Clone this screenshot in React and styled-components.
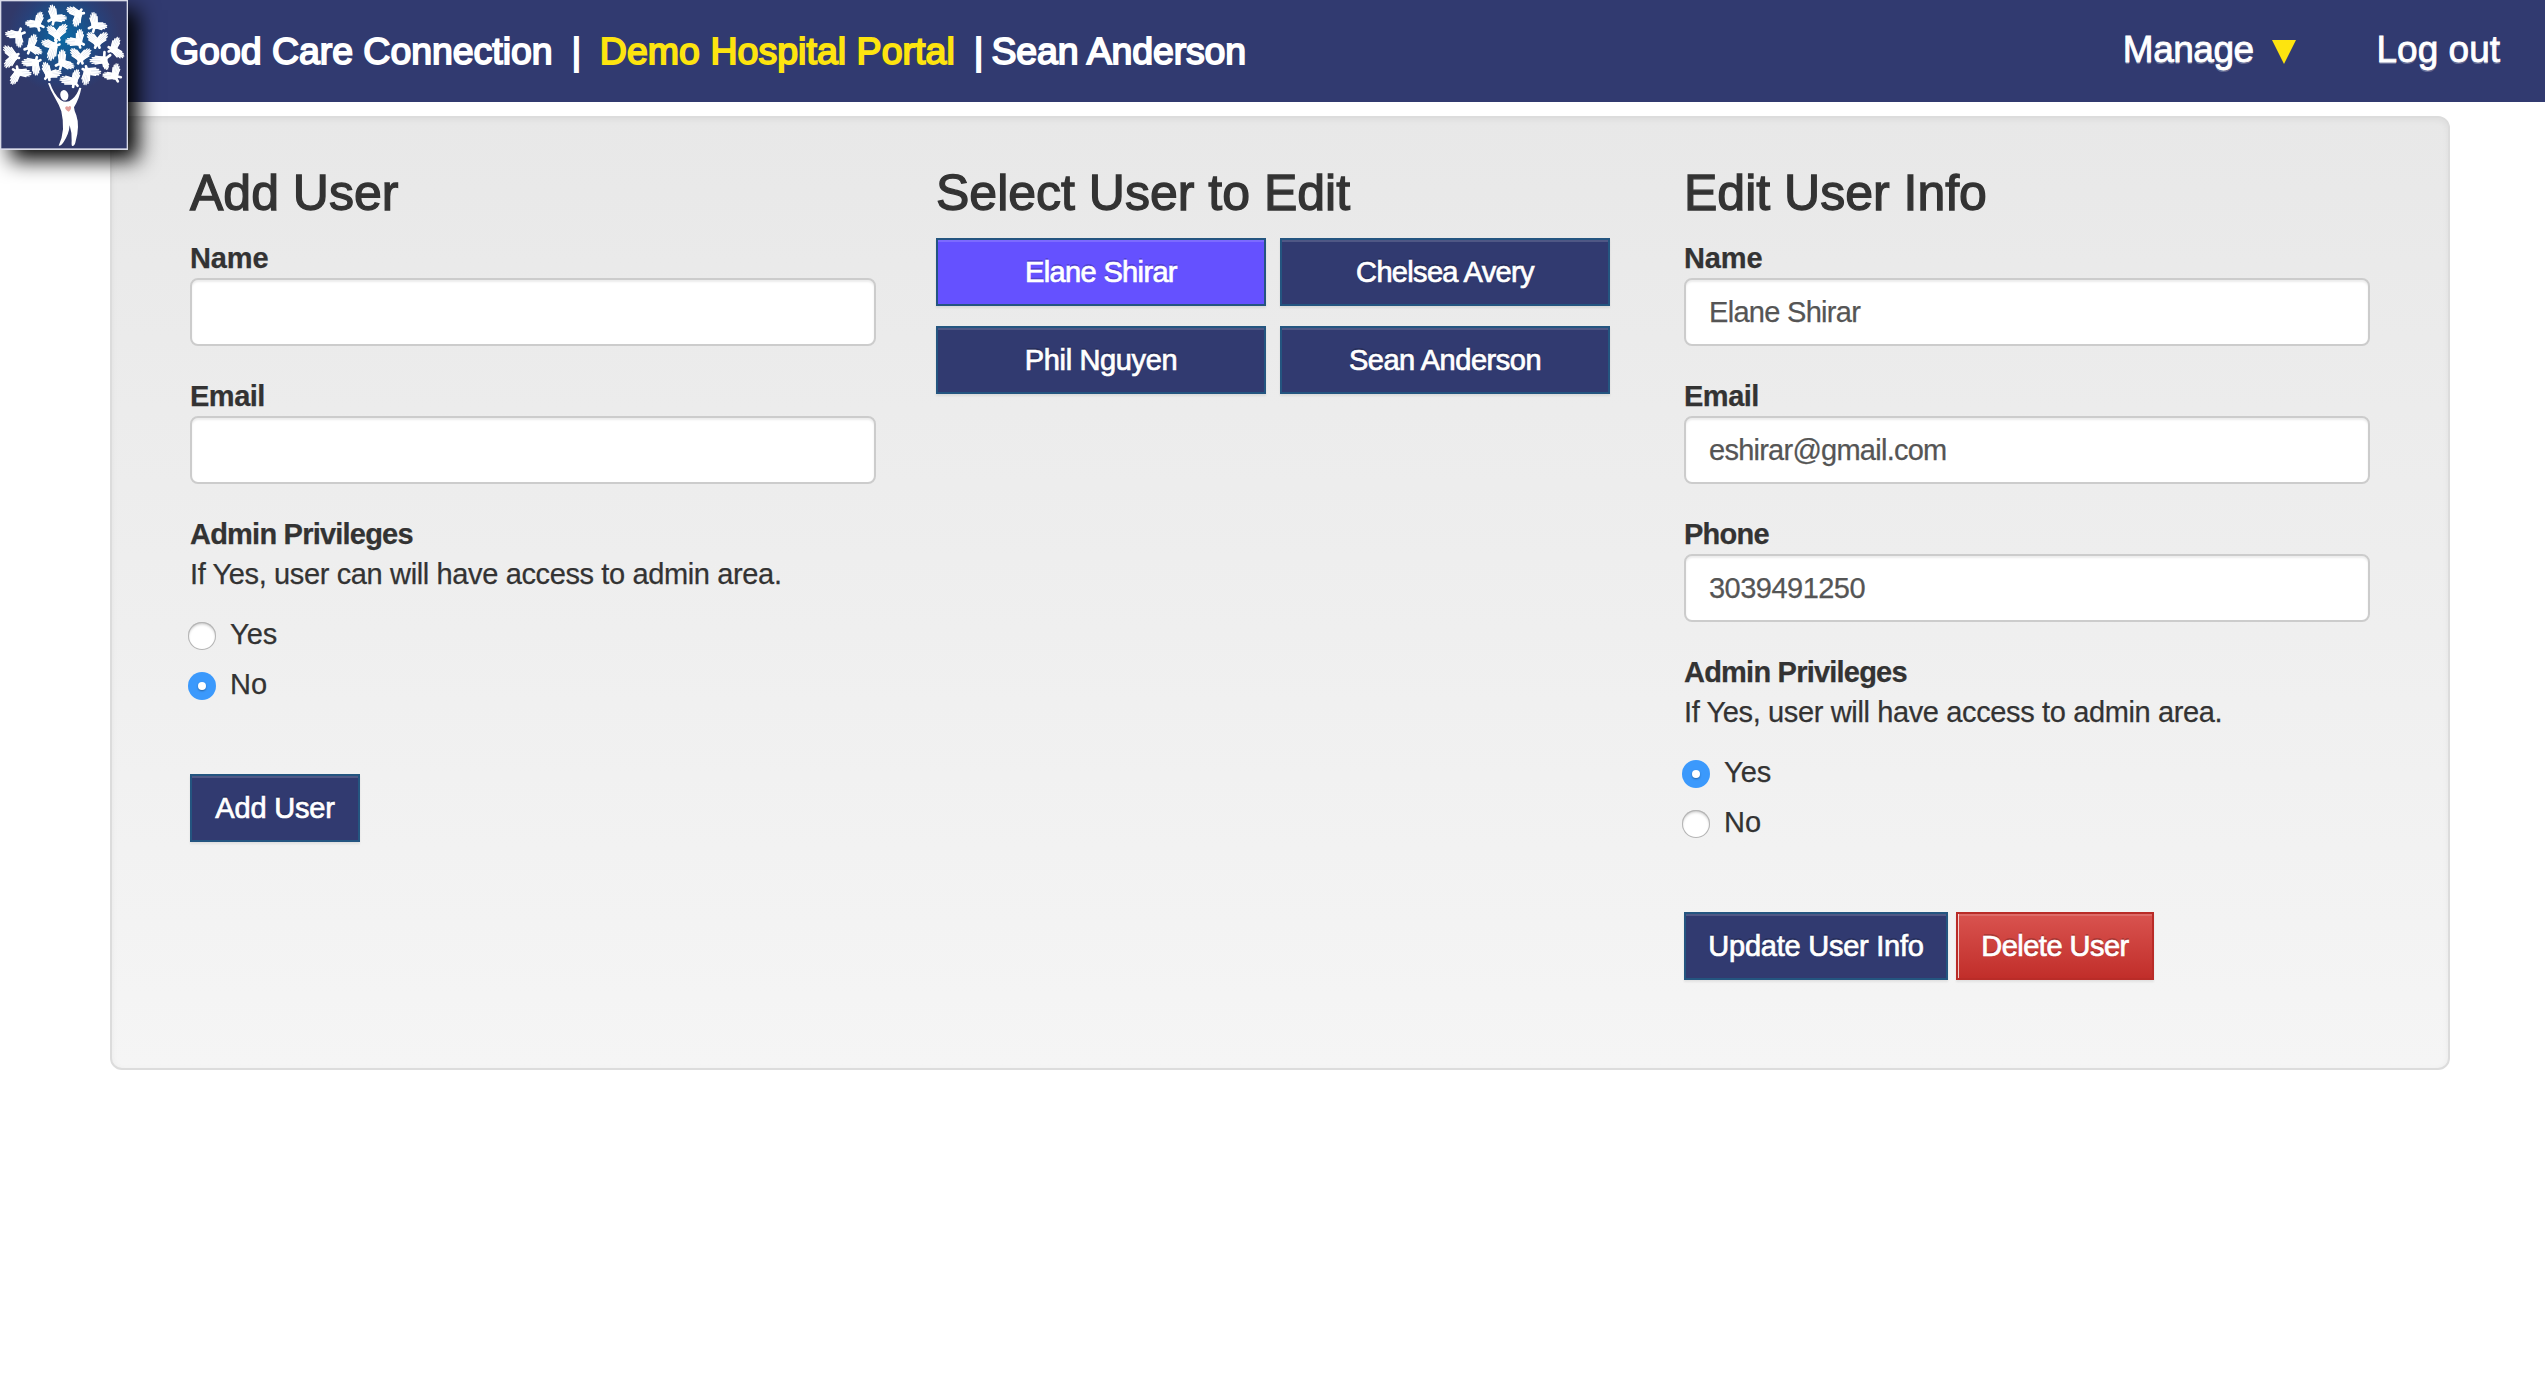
import React, { useState } from "react";
import styled, { createGlobalStyle, css } from "styled-components";

const NAVY = "#313a70";
const YELLOW = "#fde40f";

const GlobalStyle = createGlobalStyle`
  *, *::before, *::after { box-sizing: border-box; }
  body {
    margin: 0;
    background: #fff;
    color: #333;
    font-family: "Liberation Sans", Arial, Helvetica, sans-serif;
    font-size: 29px;
    line-height: 40px;
    -webkit-text-stroke: 0.25px currentColor;
  }
`;

const Header = styled.header`
  position: relative;
  z-index: 1;
  display: flex;
  align-items: center;
  justify-content: space-between;
  height: 102px;
  padding: 0 45px 0 170px;
  background: ${NAVY};
  color: #fff;
`;

const LogoLink = styled.a`
  position: absolute;
  top: 0;
  left: 0;
  width: 128px;
  height: 150px;
  box-shadow: 10px 10px 20px #000;

  svg { display: block; }
`;

const Brand = styled.div`
  display: flex;
  align-items: center;
  font-size: 37.5px;
  white-space: nowrap;
  -webkit-text-stroke: 1.8px currentColor;
`;

const BrandText = styled.span`
  color: ${(p) => (p.$accent ? YELLOW : "#fff")};
  letter-spacing: ${(p) => p.$track || 0}px;
`;

const Divider = styled.span`
  margin: 0 ${(p) => p.$after}px 0 19px;
`;

const Nav = styled.nav`
  display: flex;
  align-items: center;
  gap: 80px;
  padding-bottom: 3px;
  font-size: 37px;
`;

const NavItem = styled.a`
  display: flex;
  align-items: center;
  gap: 18px;
  color: #fff;
  letter-spacing: ${(p) => p.$track || 0}px;
  text-shadow: 0 2px 0 rgba(255, 255, 255, 0.25);
  -webkit-text-stroke: 0.8px currentColor;
`;

const Caret = styled.svg`
  width: 24px;
  height: 24px;
  margin: 5px 1px 0 0;
  fill: ${YELLOW};
`;

const Panel = styled.main`
  display: grid;
  grid-template-columns: 686px 688px 686px;
  column-gap: 60px;
  margin: 14px 95px 0 110px;
  padding: 49px 78px 88px;
  border: 2px solid #dcdcdc;
  border-radius: 12px;
  background: linear-gradient(to bottom, #e8e8e8 0%, #f5f5f5 100%);
  box-shadow: inset 0 2px 6px rgba(0, 0, 0, 0.05);
`;

const Column = styled.section`
  min-width: 0;
`;

const Heading = styled.h3`
  margin: 0 0 19px;
  font-size: 50px;
  font-weight: 400;
  line-height: 52px;
  -webkit-text-stroke: 1.3px currentColor;
`;

const Field = styled.div`
  margin-bottom: 30px;
`;

const Label = styled.label`
  display: block;
  font-weight: 700;
  letter-spacing: ${(p) => p.$track || 0}px;
`;

const Input = styled.input`
  display: block;
  width: 100%;
  height: 68px;
  padding: 0 23px;
  border: 2px solid #ccc;
  border-radius: 8px;
  outline: none;
  background: #fff;
  box-shadow: inset 0 2px 2px rgba(0, 0, 0, 0.075);
  color: #555;
  font: inherit;
  letter-spacing: ${(p) => p.$track || 0}px;
`;

const Help = styled.p`
  margin: 0;
  letter-spacing: -0.37px;
`;

const RadioList = styled.div`
  display: flex;
  flex-direction: column;
  gap: 10px;
  margin: 20px 0 70px -2px;
`;

const RadioRow = styled.div`
  display: flex;
  align-items: center;
  gap: 14px;
  height: 40px;
  cursor: pointer;
`;

const RadioMark = styled.span`
  display: flex;
  align-items: center;
  justify-content: center;
  width: 28px;
  height: 28px;
  margin-top: 4px;
  border-radius: 50%;
  background: #fff;
  box-shadow: inset 0 0 0 1px #b4b4b4, inset 0 2px 3px rgba(0, 0, 0, 0.25);

  ${(p) =>
    p.$checked &&
    css`
      background: #3b99fc;
      box-shadow: none;

      &::after {
        content: "";
        width: 8px;
        height: 8px;
        border-radius: 50%;
        background: #fff;
        box-shadow: 0 1px 2px rgba(0, 0, 0, 0.35);
      }
    `}
`;

const Button = styled.button`
  width: ${(p) => (p.$width ? `${p.$width}px` : "100%")};
  height: 68px;
  padding: 0;
  border: 2px solid #245580;
  background: ${(p) => (p.$active ? "#6551ff" : NAVY)};
  box-shadow: inset 0 2px 0 rgba(255, 255, 255, 0.15), 0 2px 2px rgba(0, 0, 0, 0.075);
  color: #fff;
  font: inherit;
  letter-spacing: ${(p) => p.$track || 0}px;
  text-shadow: 0 -2px 0 rgba(0, 0, 0, 0.2);
  white-space: nowrap;
  cursor: pointer;
  -webkit-text-stroke: 0.7px currentColor;
`;

const DangerButton = styled(Button)`
  border-color: #b92c28;
  background: linear-gradient(to bottom, #d9534f 0%, #c12e2a 100%);
  box-shadow: inset 1px 0 0 rgba(255, 255, 255, 0.75), inset 0 2px 0 rgba(255, 255, 255, 0.15),
    0 2px 2px rgba(0, 0, 0, 0.075);
`;

const UserGrid = styled.div`
  display: grid;
  grid-template-columns: repeat(2, 330px);
  gap: 20px 14px;
`;

const Actions = styled.div`
  display: flex;
  gap: 8px;
`;

/* Each dove: body centre, tips of both wings, head. Logo units are a third of a pixel. */
const DOVES = [
  [112, 72, 124, 36, 76, 70, 124, 86],
  [163, 54, 153, 15, 200, 55, 152, 68],
  [236, 42, 201, 24, 226, 80, 248, 34],
  [285, 76, 278, 37, 321, 80, 273, 90],
  [55, 105, 16, 100, 60, 142, 68, 92],
  [171, 106, 142, 80, 200, 75, 172, 120],
  [92, 142, 104, 103, 125, 160, 79, 154],
  [162, 138, 125, 124, 150, 182, 174, 128],
  [236, 126, 242, 88, 196, 124, 246, 138],
  [292, 128, 262, 100, 322, 100, 292, 143],
  [340, 148, 354, 112, 370, 172, 326, 148],
  [43, 170, 13, 138, 16, 202, 56, 168],
  [106, 188, 65, 186, 110, 226, 116, 176],
  [186, 188, 186, 149, 222, 202, 174, 202],
  [241, 175, 212, 148, 272, 149, 241, 190],
  [312, 180, 269, 181, 322, 208, 322, 161],
  [54, 217, 34, 252, 94, 220, 45, 204],
  [146, 224, 132, 187, 184, 218, 142, 238],
  [222, 244, 234, 209, 179, 238, 226, 259],
  [262, 214, 303, 216, 254, 255, 253, 203],
  [344, 228, 352, 191, 308, 226, 358, 238],
];

/* Feather tips of a wing as [length, sideways offset] relative to its span. */
const FEATHERS = [
  [0.6, -0.28],
  [0.82, -0.18],
  [0.97, -0.05],
  [0.96, 0.09],
  [0.84, 0.21],
  [0.62, 0.27],
];

function Wing({ x, y, tx, ty, side }) {
  const dx = tx - x;
  const dy = ty - y;
  const at = (t, w) =>
    `${(x + dx * t - dy * w * side).toFixed(1)} ${(y + dy * t + dx * w * side).toFixed(1)}`;
  return (
    <>
      <path
        fill="#ccd5e5"
        d={`M${at(0, -0.26)} L${at(0.6, -0.28)} L${at(0.97, 0)} L${at(0.62, 0.27)} L${at(0.1, 0.26)}Z`}
      />
      {FEATHERS.map(([t, w]) => (
        <path
          key={w}
          d={`M${at(0.12, w * 0.7)} L${at(t, w)}`}
          stroke="#fff"
          strokeWidth="4"
          strokeLinecap="round"
        />
      ))}
    </>
  );
}

function Dove({ x, y, ax, ay, bx, by, hx, hy }) {
  const cross = (ax - x) * (by - y) - (ay - y) * (bx - x);
  const side = cross > 0 ? 1 : -1;
  const nx = -(hy - y) * 0.45;
  const ny = (hx - x) * 0.45;
  return (
    <g>
      <Wing x={x} y={y} tx={ax} ty={ay} side={side} />
      <Wing x={x} y={y} tx={bx} ty={by} side={-side} />
      <circle cx={x} cy={y} r="11" fill="#fff" />
      <path
        d={`M${x} ${y} L${hx + nx} ${hy + ny} M${x} ${y} L${hx - nx} ${hy - ny}`}
        stroke="#fff"
        strokeWidth="8"
        strokeLinecap="round"
      />
    </g>
  );
}

function Logo() {
  return (
    <svg width="128" height="150" viewBox="0 0 384 450" role="img" aria-label="Good Care Connection">
      <defs>
        <radialGradient id="sky" gradientUnits="userSpaceOnUse" cx="190" cy="112" r="170">
          <stop offset="0" stopColor="#0c6ca6" />
          <stop offset="0.35" stopColor="#17558f" />
          <stop offset="0.75" stopColor="#294078" />
          <stop offset="1" stopColor="#313969" />
        </radialGradient>
      </defs>
      <rect width="384" height="450" fill="#d9dbe8" />
      <rect x="4" y="4" width="376" height="441" fill="url(#sky)" />
      {DOVES.map(([x, y, ax, ay, bx, by, hx, hy]) => (
        <Dove key={`${x}-${y}`} x={x} y={y} ax={ax} ay={ay} bx={bx} by={by} hx={hx} hy={hy} />
      ))}
      <ellipse cx="193" cy="286" rx="12" ry="16" fill="#fff" transform="rotate(-14 193 286)" />
      <path
        fill="#fff"
        d="M144 250 L150 249 Q162 284 182 300 Q200 312 216 298 Q232 284 238 263 L244 264 Q238 296 222 322 Q223 334 229 346 Q240 378 227 424 Q225 438 217 438 Q214 438 215 422 Q216 398 209 376 Q207 402 191 426 Q184 438 176 437 Q187 414 189 388 Q190 360 184 334 Q178 316 164 292 Q151 270 144 250Z"
      />
      <path fill="#e5a09c" d="M206 335 Q193 328 196 322 Q200 316 205 321 Q209 315 213 320 Q215 327 206 335Z" />
    </svg>
  );
}

function TextField({ label, track, value, valueTrack }) {
  return (
    <Field>
      <Label $track={track}>{label}</Label>
      <Input type="text" aria-label={label} defaultValue={value} $track={valueTrack} />
    </Field>
  );
}

function AdminChoice({ help, initial }) {
  const [choice, setChoice] = useState(initial);
  return (
    <>
      <Label as="div" $track={-0.78}>Admin Privileges</Label>
      <Help>{help}</Help>
      <RadioList role="radiogroup">
        {["Yes", "No"].map((option) => (
          <RadioRow
            key={option}
            role="radio"
            aria-checked={choice === option}
            onClick={() => setChoice(option)}
          >
            <RadioMark $checked={choice === option} />
            <span>{option}</span>
          </RadioRow>
        ))}
      </RadioList>
    </>
  );
}

const USERS = [
  { name: "Elane Shirar", track: -0.65 },
  { name: "Chelsea Avery", track: -0.67 },
  { name: "Phil Nguyen", track: -0.37 },
  { name: "Sean Anderson", track: -0.48 },
];

export default function App() {
  return (
    <>
      <GlobalStyle />
      <Header>
        <LogoLink>
          <Logo />
        </LogoLink>
        <Brand>
          <BrandText $track={-0.05}>Good Care Connection</BrandText>
          <Divider $after={18.5}>|</Divider>
          <BrandText $accent $track={0.03}>Demo Hospital Portal</BrandText>
          <Divider $after={8}>|</Divider>
          <BrandText $track={-0.15}>Sean Anderson</BrandText>
        </Brand>
        <Nav>
          <NavItem $track={-0.5}>
            Manage
            <Caret viewBox="0 0 24 24">
              <path d="M0 0H24L12 24Z" />
            </Caret>
          </NavItem>
          <NavItem>Log out</NavItem>
        </Nav>
      </Header>

      <Panel>
        <Column>
          <Heading>Add User</Heading>
          <TextField label="Name" track={-0.1} />
          <TextField label="Email" track={-0.5} />
          <AdminChoice help="If Yes, user can will have access to admin area." initial="No" />
          <Button $width={170} $track={-0.2}>Add User</Button>
        </Column>

        <Column>
          <Heading>Select User to Edit</Heading>
          <UserGrid>
            {USERS.map((user, index) => (
              <Button key={user.name} $active={index === 0} $track={user.track}>
                {user.name}
              </Button>
            ))}
          </UserGrid>
        </Column>

        <Column>
          <Heading>Edit User Info</Heading>
          <TextField label="Name" track={-0.1} value="Elane Shirar" valueTrack={-0.7} />
          <TextField label="Email" track={-0.5} value="eshirar@gmail.com" valueTrack={-0.75} />
          <TextField label="Phone" track={-0.75} value="3039491250" valueTrack={-0.52} />
          <AdminChoice help="If Yes, user will have access to admin area." initial="Yes" />
          <Actions>
            <Button $width={264} $track={-0.24}>Update User Info</Button>
            <DangerButton $width={198} $track={-0.52}>Delete User</DangerButton>
          </Actions>
        </Column>
      </Panel>
    </>
  );
}
